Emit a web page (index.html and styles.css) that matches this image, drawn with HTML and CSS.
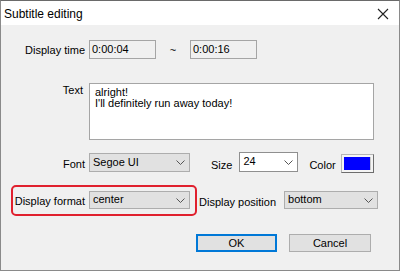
FILE: index.html
```html
<!DOCTYPE html>
<html lang="en">
<head>
  <meta charset="UTF-8">
  <title>Subtitle editing</title>
  <link rel="stylesheet" href="styles.css">
</head>
<body>
  <div class="dialog">
    <div class="titlebar">
      <span class="title">Subtitle editing</span>
      <svg class="close" width="12" height="12" viewBox="0 0 12 12">
        <path d="M1 1 L11 11 M11 1 L1 11" stroke="#222" stroke-width="1.1" fill="none"/>
      </svg>
    </div>

    <div class="content">
      <!-- Display time -->
      <div class="row row-time">
        <label class="label">Display time</label>
        <div class="field time">0:00:04</div>
        <span class="tilde">~</span>
        <div class="field time">0:00:16</div>
      </div>

      <!-- Text -->
      <div class="row row-text">
        <label class="label label-top">Text</label>
        <div class="textarea">alright!<br>I'll definitely run away today!</div>
      </div>

      <!-- Font / Size / Color -->
      <div class="row row-font">
        <label class="label">Font</label>
        <div class="select select-font">
          <span>Segoe UI</span>
          <svg class="chev" width="9" height="5" viewBox="0 0 9 5"><path d="M0.5 0.5 L4.5 4.5 L8.5 0.5" stroke="#555" fill="none"/></svg>
        </div>
        <label class="label-inline size-label">Size</label>
        <div class="select combo select-size">
          <span>24</span>
          <svg class="chev" width="9" height="5" viewBox="0 0 9 5"><path d="M0.5 0.5 L4.5 4.5 L8.5 0.5" stroke="#555" fill="none"/></svg>
        </div>
        <label class="label-inline color-label">Color</label>
        <div class="swatch"><div class="swatch-fill"></div></div>
      </div>

      <!-- Display format / position -->
      <div class="row row-format">
        <div class="highlight"></div>
        <label class="label">Display format</label>
        <div class="select select-format">
          <span>center</span>
          <svg class="chev" width="9" height="5" viewBox="0 0 9 5"><path d="M0.5 0.5 L4.5 4.5 L8.5 0.5" stroke="#555" fill="none"/></svg>
        </div>
        <label class="label-inline position-label">Display position</label>
        <div class="select select-position">
          <span>bottom</span>
          <svg class="chev" width="9" height="5" viewBox="0 0 9 5"><path d="M0.5 0.5 L4.5 4.5 L8.5 0.5" stroke="#555" fill="none"/></svg>
        </div>
      </div>

      <div class="row actions">
        <button class="btn btn-default">OK</button>
        <button class="btn">Cancel</button>
      </div>
    </div>
  </div>
</body>
</html>
```

FILE: styles.css
```css
body {
  margin: 0;
  background: #3a3a3a;
  font-family: "Liberation Sans", Arial, sans-serif;
  font-size: 11px;
  color: #000;
}
.dialog {
  width: 400px;
  height: 271px;
  box-sizing: border-box;
  background: #f0f0f0;
  border: 1px solid #8a8a8a;
  border-top-color: #6a6a6a;
}
.titlebar {
  height: 24px;
  background: #fff;
  display: flex;
  align-items: center;
  justify-content: space-between;
  padding: 0 10px 0 3px;
}
.title {
  font-size: 12px;
  padding-top: 2px;
}
.close {
  margin-top: 1px;
}

.row {
  display: flex;
  align-items: flex-end;
}
.label {
  width: 88px;
  box-sizing: border-box;
  padding-right: 4px;
  text-align: right;
  white-space: nowrap;
  line-height: 13px;
  padding-bottom: 2px;
}
.label-top {
  align-self: flex-start;
  padding-top: 1px;
  padding-right: 6px;
}
.label-inline {
  white-space: nowrap;
  line-height: 13px;
  padding-bottom: 1px;
}

/* Display time */
.row-time {
  margin-top: 15px;
}
.field {
  box-sizing: border-box;
  border: 1px solid #a5a5a5;
  background: #f0f0f0;
  padding: 2px 2px;
  line-height: 12px;
}
.time {
  width: 67px;
  height: 19px;
}
.tilde {
  width: 34px;
  text-align: center;
  padding-bottom: 3px;
  line-height: 12px;
}

/* Text */
.row-text {
  margin-top: 24px;
  align-items: flex-start;
}
.textarea {
  width: 285px;
  height: 57px;
  box-sizing: border-box;
  border: 1px solid #a5a5a5;
  background: #fff;
  padding: 3px 5px;
  line-height: 11px;
}

/* Selects */
.select {
  box-sizing: border-box;
  height: 19px;
  border: 1px solid #adadad;
  background: #e1e1e1;
  display: flex;
  align-items: center;
  justify-content: space-between;
  padding: 0 4px 0 3px;
  line-height: 12px;
}
.select span {
  margin-top: -2px;
}
.combo {
  background: #fff;
  border-color: #8f8f8f;
  align-items: flex-start;
}
.combo span {
  margin-top: 2px;
}
.combo .chev {
  margin-top: 7px;
}

.row-font {
  margin-top: 12px;
  height: 21px;
}
.select-font {
  width: 101px;
  margin-bottom: 1px;
}
.size-label {
  margin-left: 21px;
}
.select-size {
  width: 59px;
  height: 20px;
  margin-left: 7px;
  margin-bottom: 1px;
}
.color-label {
  margin-left: 11px;
}
.swatch {
  width: 33px;
  height: 19px;
  margin-left: 5px;
  box-sizing: border-box;
  border: 1px solid #b5b5b5;
  border-right-color: #6d6d6d;
  border-bottom-color: #6d6d6d;
  background: #f4f4f4;
  padding: 2px;
}
.swatch-fill {
  height: 100%;
  background: #0000ff;
  border-right: 1px solid #c8c8c8;
  box-sizing: border-box;
}

/* Display format */
.row-format {
  margin-top: 18px;
  position: relative;
}
.row-format .label {
  padding-bottom: 1px;
}
.select-format {
  width: 101px;
  height: 18px;
}
.position-label {
  margin-left: 9px;
  padding-bottom: 0;
}
.select-position {
  width: 94px;
  height: 18px;
  margin-left: 8px;
}
.highlight {
  position: absolute;
  left: 10px;
  top: -6px;
  width: 186px;
  height: 31px;
  box-sizing: border-box;
  border: 2px solid #e0202e;
  border-radius: 5px;
}

/* Buttons */
.actions {
  margin-top: 25px;
  padding-left: 195px;
  gap: 12px;
}
.btn {
  box-sizing: border-box;
  height: 18px;
  width: 82px;
  border: 1px solid #adadad;
  background: #e1e1e1;
  font-family: "Liberation Sans", Arial, sans-serif;
  font-size: 11px;
  color: #000;
  padding: 0;
  line-height: 14px;
}
.btn-default {
  width: 81px;
  border-color: #0078d7;
  box-shadow: inset 0 0 0 1px #0078d7;
}
```
